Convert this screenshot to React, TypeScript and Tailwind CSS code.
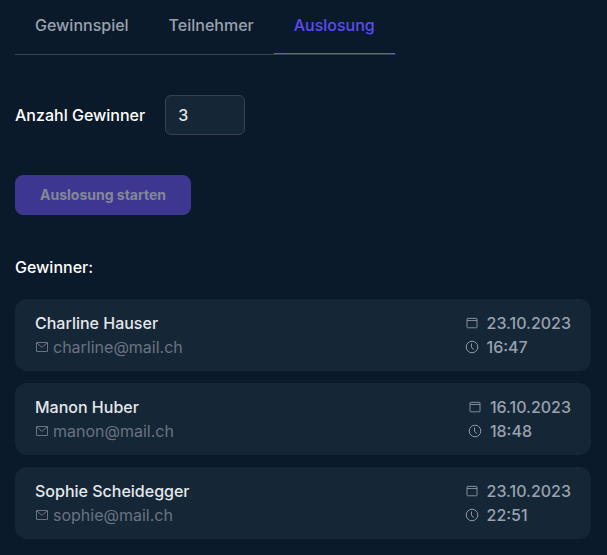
import { useState } from "react";

type Winner = {
  name: string;
  email: string;
  date: string;
  time: string;
};

const tabs = ["Gewinnspiel", "Teilnehmer", "Auslosung"];

const winners: Winner[] = [
  { name: "Charline Hauser", email: "charline@mail.ch", date: "23.10.2023", time: "16:47" },
  { name: "Manon Huber", email: "manon@mail.ch", date: "16.10.2023", time: "18:48" },
  { name: "Sophie Scheidegger", email: "sophie@mail.ch", date: "23.10.2023", time: "22:51" },
];

const iconProps = {
  width: 14,
  height: 14,
  viewBox: "0 0 14 14",
  fill: "none",
  stroke: "currentColor",
  "aria-hidden": true,
};

function MailIcon() {
  return (
    <svg {...iconProps} strokeWidth={1}>
      <path d="M1.5 2.5h11v9h-11z" />
      <path d="M2 3 7 7.4 12 3" />
    </svg>
  );
}

function CalendarIcon() {
  return (
    <svg {...iconProps} strokeWidth={0.8}>
      <rect x="2" y="2.4" width="10" height="9.4" rx="0.6" />
      <path d="M2 4.5h10M4.4 1.8v.6M9.6 1.8v.6" />
    </svg>
  );
}

function ClockIcon() {
  return (
    <svg {...iconProps} strokeWidth={0.9}>
      <circle cx="7" cy="7" r="5.8" />
      <path d="M6.5 3.5v4L9 9.5" />
    </svg>
  );
}

function WinnerCard({ winner }: { winner: Winner }) {
  return (
    <li className="flex justify-between rounded-xl bg-[#152736] px-5 py-3">
      <div>
        <p className="text-gray-200">{winner.name}</p>
        <p className="flex items-center gap-1 font-normal text-gray-500">
          <MailIcon />
          {winner.email}
        </p>
      </div>
      <div className="text-gray-400">
        <p className="flex items-center gap-2">
          <CalendarIcon />
          {winner.date}
        </p>
        <p className="flex items-center gap-2">
          <ClockIcon />
          {winner.time}
        </p>
      </div>
    </li>
  );
}

export default function App() {
  const [activeTab, setActiveTab] = useState("Auslosung");
  const [count, setCount] = useState("3");

  return (
    <main className="min-h-screen bg-[#0b1a2a] pr-4 pb-4 pl-[15px] font-['Inter',sans-serif] text-base font-medium text-white">
      <nav className="flex w-fit border-b border-gray-700 pr-px">
        {tabs.map((tab) => (
          <button
            key={tab}
            type="button"
            onClick={() => setActiveTab(tab)}
            className={`border-b px-5 pt-[13px] pb-4 ${
              tab === activeTab
                ? "border-[#6152f5] text-[#5b4bf5]"
                : "border-transparent text-gray-400"
            }`}
          >
            {tab}
          </button>
        ))}
      </nav>

      <div className="mt-10 flex items-center gap-5">
        <label htmlFor="count">Anzahl Gewinner</label>
        <input
          id="count"
          type="text"
          inputMode="numeric"
          value={count}
          onChange={(e) => setCount(e.target.value)}
          className="h-10 w-20 rounded-md border border-gray-700 bg-[#152736] px-3 text-gray-200"
        />
      </div>

      <button
        type="button"
        disabled
        className="mt-10 h-10 rounded-lg border border-[#3e3792] bg-[#3e3792] px-6 text-sm font-bold text-[#838797]"
      >
        Auslosung starten
      </button>

      <h2 className="mt-10">Gewinner:</h2>
      <ul className="mt-5 space-y-3">
        {winners.map((winner) => (
          <WinnerCard key={winner.email} winner={winner} />
        ))}
      </ul>
    </main>
  );
}
